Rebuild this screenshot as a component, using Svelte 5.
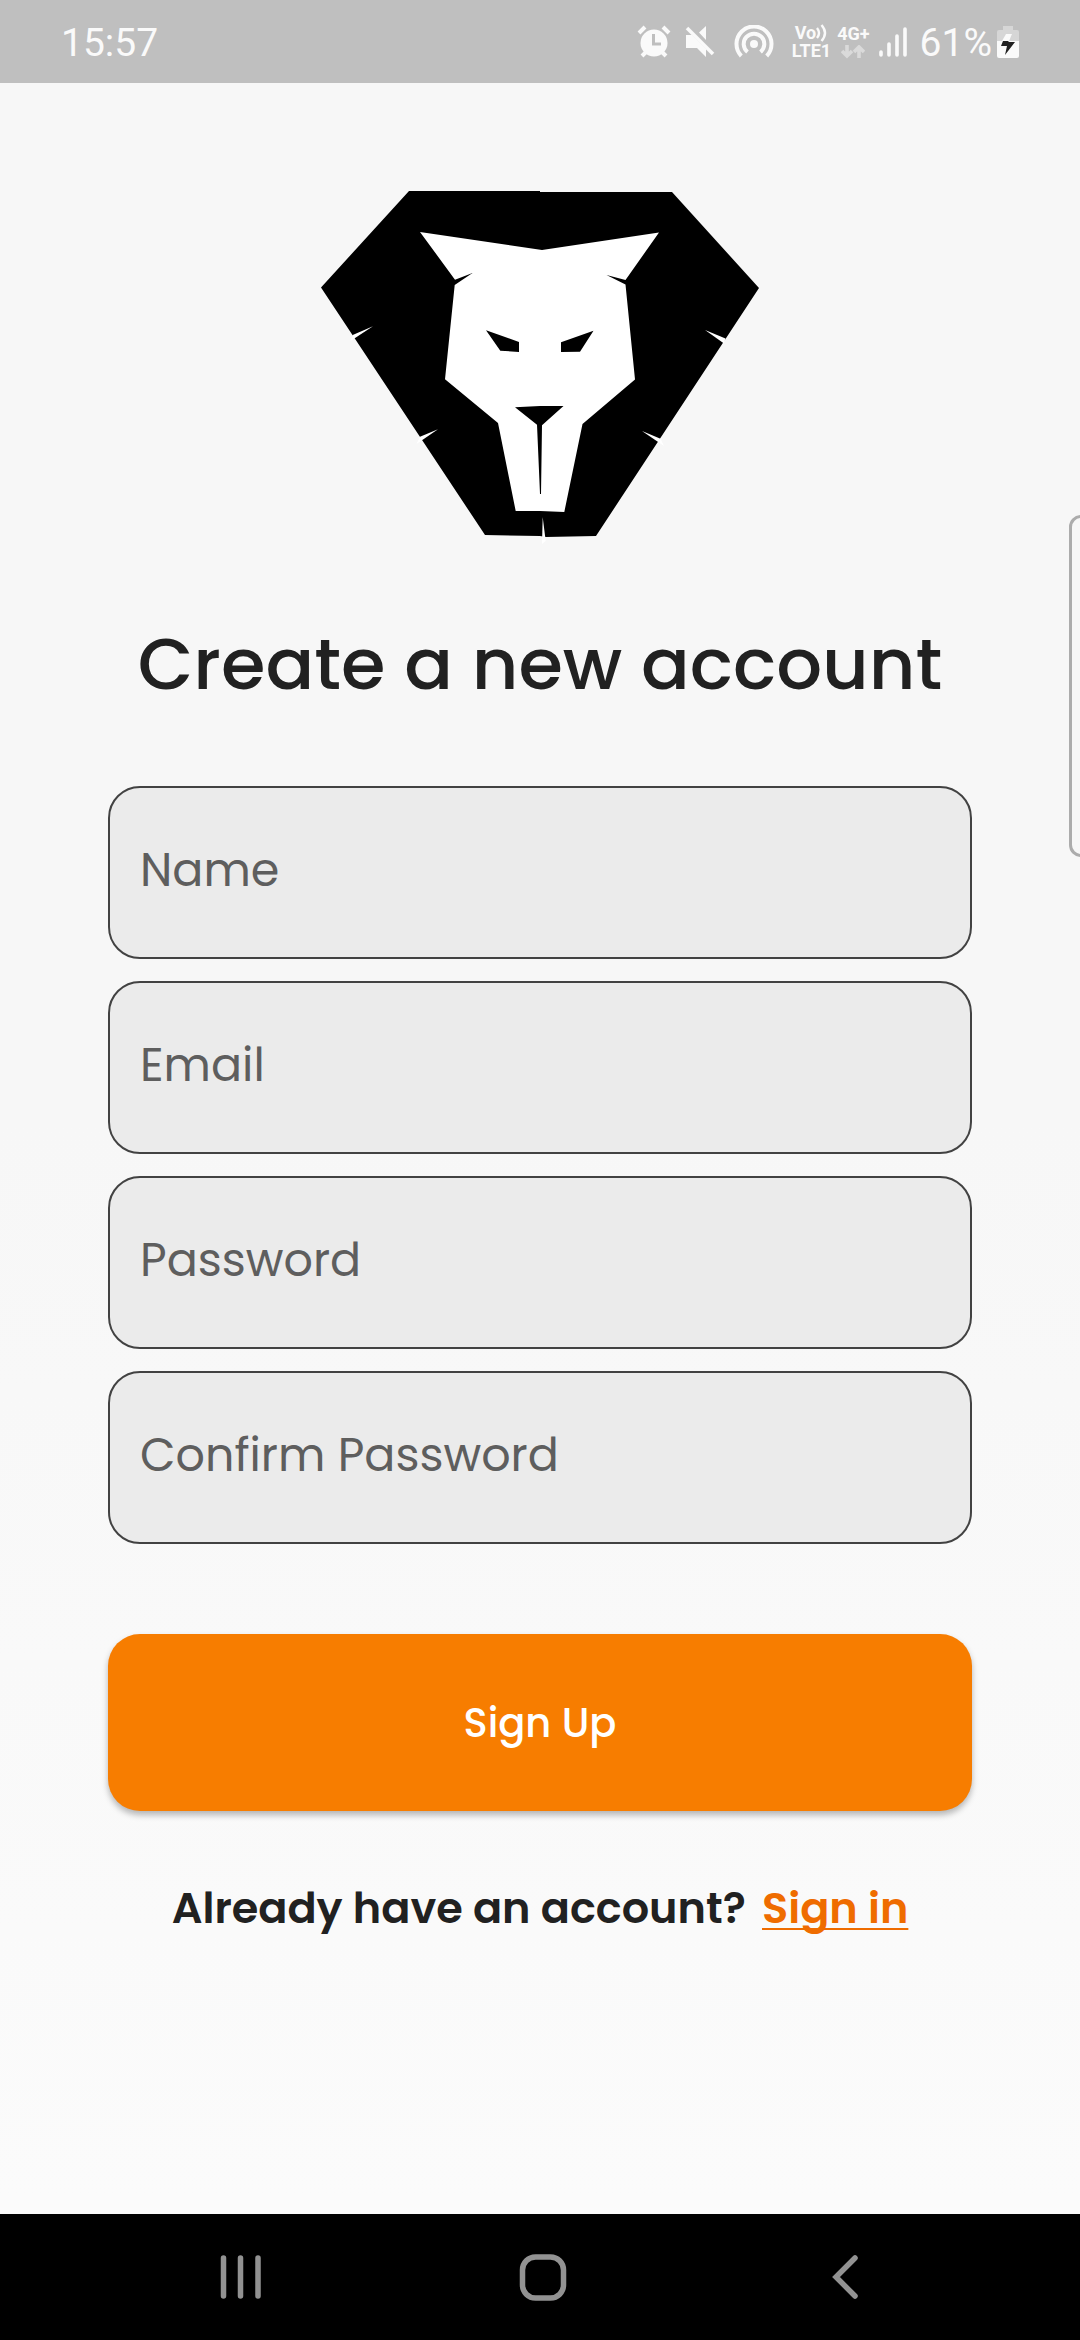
<script lang="ts">
  const fields = [
    { id: 'name', label: 'Name', type: 'text', autocomplete: 'name' },
    { id: 'email', label: 'Email', type: 'email', autocomplete: 'email' },
    { id: 'password', label: 'Password', type: 'password', autocomplete: 'new-password' },
    { id: 'confirm', label: 'Confirm Password', type: 'password', autocomplete: 'new-password' }
  ] as const;

  function submit(event: Event) {
    event.preventDefault();
  }
</script>

<div class="screen">
  <header class="status">
    <time>15:57</time>
    <div class="indicators">
      <svg class="alarm" width="34" height="34" viewBox="0 0 34 34" aria-hidden="true">
        <path d="M2 8 8 2M26 2l6 6M5 31l6-6M29 31l-6-6" fill="none" stroke="#fafafa" stroke-width="4" />
        <circle cx="17" cy="18" r="13.5" fill="#fafafa" />
        <path d="M16.5 9v10H24" fill="none" stroke="#bfbfbf" stroke-width="3" />
      </svg>
      <svg class="mute" width="30" height="34" viewBox="0 0 30 34" aria-hidden="true">
        <path d="M14 7.500 21 1v14zM1 10h6l14 14v8l-9-9H1z" fill="#fafafa" />
        <path d="M2 3 28 29" stroke="#fafafa" stroke-width="3.600" />
      </svg>
      <svg class="hotspot" width="40" height="34" viewBox="0 0 40 34" aria-hidden="true">
        <circle cx="20" cy="19" r="4" fill="#fafafa" />
        <path d="M7.300 31A17.500 17.500 0 1 1 32.700 31M13.500 27A10.300 10.300 0 1 1 26.500 27" fill="none" stroke="#fafafa" stroke-width="4" />
      </svg>
      <div class="volte">
        <span class="vo">Vo<svg width="12" height="18" viewBox="0 0 12 18" aria-hidden="true">
          <path d="M1 4q4 5 0 10M5.500 1q7 8 0 16" fill="none" stroke="#fafafa" stroke-width="2.400" />
        </svg></span>
        <span>LTE1</span>
      </div>
      <div class="network">
        <span>4G+</span>
        <svg width="24" height="14" viewBox="0 0 24 14" aria-hidden="true">
          <path d="M6 0v11M1 6l5 5 5-5M18 13V2M13 7l5-5 5 5" fill="none" stroke="#dadada" stroke-width="3.600" />
        </svg>
      </div>
      <svg class="signal" width="28" height="32" viewBox="0 0 28 32" aria-hidden="true">
        <path d="M2 26v3M10 18v11M18 10v19M26 3v26" stroke="#fafafa" stroke-width="3.600" stroke-linecap="round" />
      </svg>
      <span class="level">61%</span>
      <svg width="22" height="34" viewBox="0 0 22 34" aria-hidden="true">
        <path d="M6 1h10v4h4q2 0 2 2v9H0V7q0-2 2-2h4z" fill="#d6d6d6" />
        <path d="M0 16h22v15q0 2-2 2H2q-2 0-2-2z" fill="#fafafa" />
        <path d="M9 9h6l-3 7H5z" fill="#fafafa" />
        <path d="M6 16h6l-1 1h7L8 30l2-9H4z" fill="#212121" />
      </svg>
    </div>
  </header>

  <main>
    <svg class="logo" width="440" height="354" viewBox="0 0 440 354" role="img" aria-label="Lion head">
      <path d="M89 1H220V2H352L439 98 276 346 226 347 220 346 165 345 1 97.500z" />
      <g fill="#fff">
        <path d="M100 42 222 60 339 42.500 305.500 90 286.500 85 305.500 94.500 315 189.500 262.500 234 244.300 322 220 321H195.700L178 233 125 189.300 134.700 95 152.500 83 135 89.700z" />
        <path d="M30.500 151 32.700 145 53 136.300z" />
        <path d="M96.500 254 100 246.700 118 239.300z" />
        <path d="M385 140 405.500 148.500 404 153.500z" />
        <path d="M322 241 340.500 248.700 344 256z" />
        <path d="M222.700 327 225.700 351 222 354z" />
      </g>
      <path d="M166 140.300 199 152V162L180.300 160.700zM273.500 140.700 241 152.300V162L260 161.700zM195 217.300 220 216H243.500L222 235.300 221 304H220L217 234.700z" />
    </svg>

    <h1>Create a new account</h1>

    <form onsubmit={submit}>
      <div class="fields">
        {#each fields as field (field.id)}
          <input
            id={field.id}
            name={field.id}
            type={field.type}
            placeholder={field.label}
            aria-label={field.label}
            autocomplete={field.autocomplete}
          />
        {/each}
      </div>
      <button class="submit" type="submit">Sign Up</button>
    </form>

    <p class="switch">Already have an account? <a href="#signin">Sign in</a></p>
  </main>

  <nav aria-label="System">
    <button type="button" aria-label="Recent apps">
      <svg width="48" height="48" viewBox="0 0 48 48">
        <path d="M6.500 5v38M23.500 5v38M41 5v38" stroke="#929292" stroke-width="5.500" stroke-linecap="round" />
      </svg>
    </button>
    <button type="button" aria-label="Home">
      <svg width="48" height="48" viewBox="0 0 48 48">
        <rect x="3.500" y="4" width="41" height="41" rx="13" fill="none" stroke="#929292" stroke-width="5.500" />
      </svg>
    </button>
    <button type="button" aria-label="Back">
      <svg width="48" height="48" viewBox="0 0 48 48">
        <path d="M34 5 15 24 34 43" fill="none" stroke="#929292" stroke-width="5.500" stroke-linecap="round" />
      </svg>
    </button>
  </nav>

  <div class="edge-panel"></div>
</div>

<style>
  :global(body) {
    margin: 0;
  }

  .screen {
    position: relative;
    display: flex;
    flex-direction: column;
    min-height: 100vh;
    overflow: hidden;
    background: linear-gradient(#f7f7f7 48%, #fbfbfb 94%);
    color: #212121;
    font-family: Poppins, Inter, sans-serif;
  }

  .status {
    display: flex;
    align-items: center;
    justify-content: space-between;
    height: 83px;
    padding: 0 61px;
    background: #bfbfbf;
    color: #fafafa;
    font-family: Roboto, sans-serif;
    font-size: 39px;
    line-height: 48px;
  }

  time,
  .level {
    padding-top: 3px;
  }

  .indicators {
    display: flex;
    align-items: center;
  }

  .mute {
    margin-left: 14px;
  }

  .hotspot {
    margin: 0 18px 0 19px;
  }

  .volte,
  .network {
    display: flex;
    flex-direction: column;
    align-items: center;
    font-size: 18px;
    font-weight: 700;
    line-height: 18px;
  }

  .network {
    gap: 2px;
    margin: 0 9px 0 6px;
  }

  .vo {
    display: flex;
    align-items: center;
  }

  .level {
    margin: 0 5px 0 13px;
  }

  main {
    display: flex;
    flex: 1;
    flex-direction: column;
    align-items: center;
    padding: 107px 10% 80px;
  }

  h1 {
    margin: 75px 0 77px;
    font-size: 72px;
    font-weight: 500;
    line-height: 90px;
    white-space: nowrap;
  }

  form {
    width: 100%;
  }

  .fields {
    display: grid;
    gap: 22px;
  }

  input {
    box-sizing: border-box;
    width: 100%;
    height: 173px;
    padding: 0 30px 4px;
    border: 2px solid #424242;
    border-radius: 32px;
    background: #ebebeb;
    color: #212121;
    font: inherit;
    font-size: 46px;
  }

  input::placeholder {
    color: #5e5e5e;
    opacity: 1;
  }

  .submit {
    display: block;
    width: 100%;
    height: 177px;
    margin-top: 90px;
    border: 0;
    border-radius: 32px;
    background: #f77d00;
    box-shadow: 0 4px 6px rgb(0 0 0 / 28%);
    color: #fff;
    font: inherit;
    font-size: 40px;
    font-weight: 500;
  }

  .switch {
    margin: 67px 0 0;
    font-size: 43px;
    font-weight: 600;
    line-height: 60px;
    white-space: nowrap;
  }

  .switch a {
    margin-left: 6px;
    color: #ef6c00;
    text-decoration-thickness: 2px;
    text-decoration-skip-ink: none;
    text-underline-offset: 5px;
  }

  nav {
    display: grid;
    grid-template-columns: repeat(3, 1fr);
    height: 126px;
    padding: 0 84px 0 90px;
    background: #000;
  }

  nav button {
    display: grid;
    place-items: center;
    padding: 0;
    border: 0;
    background: none;
  }

  .edge-panel {
    position: absolute;
    top: 515px;
    right: -20px;
    width: 25px;
    height: 336px;
    border: 3px solid #acacac;
    border-radius: 12px;
    background: #f7f7f7;
  }
</style>
